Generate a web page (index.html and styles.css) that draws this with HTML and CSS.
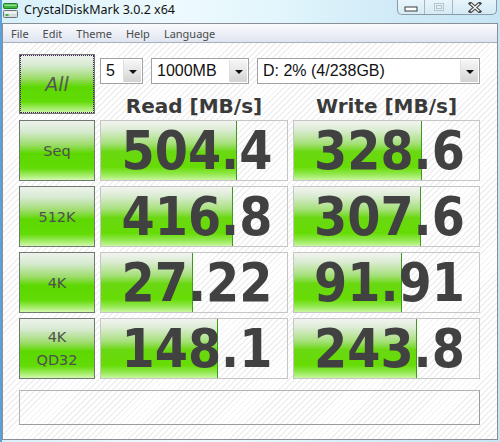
FILE: index.html
```html
<!DOCTYPE html>
<html>
<head>
<meta charset="utf-8">
<link rel="stylesheet" href="styles.css">
</head>
<body>
<div class="window">
  <div class="titlebar">
    <svg class="app-icon" width="15" height="15" viewBox="0 0 15 15">
      <rect x="0.5" y="0.5" width="14" height="5" rx="1" fill="#3fb43f" stroke="#1f7a2a"/>
      <rect x="1.5" y="1.5" width="12" height="1.5" fill="#8ee08e"/>
      <rect x="0.5" y="7.5" width="14" height="7" rx="1" fill="#d6dade" stroke="#6b7278"/>
      <rect x="1.5" y="8.5" width="12" height="2" fill="#f4f6f8"/>
      <rect x="2.5" y="11" width="3" height="2" fill="#3fb43f"/>
    </svg>
    <span class="title">CrystalDiskMark 3.0.2 x64</span>
    <div class="caption-buttons">
      <div class="cap cap-min">
        <svg width="14" height="6" viewBox="0 0 14 6"><rect x="1" y="1" width="12" height="4" fill="#fff" stroke="#3a3a3a"/></svg>
      </div>
      <div class="cap cap-max">
        <svg width="12" height="10" viewBox="0 0 12 10"><rect x="1.5" y="1.5" width="9" height="7" fill="none" stroke="#b8c4cc"/><rect x="3.5" y="3.5" width="5" height="3" fill="none" stroke="#b8c4cc"/></svg>
      </div>
      <div class="cap cap-close">
        <svg width="14" height="11" viewBox="0 0 14 11"><path d="M2.5 1.5 L11.5 9.5 M11.5 1.5 L2.5 9.5" stroke="#4a4a4a" stroke-width="3.6" stroke-linecap="square"/><path d="M2.8 1.8 L11.2 9.2 M11.2 1.8 L2.8 9.2" stroke="#f4f4f4" stroke-width="1.4"/></svg>
      </div>
    </div>
  </div>
  <div class="frame">
    <div class="menubar">
      <span class="menu-item">File</span>
      <span class="menu-item">Edit</span>
      <span class="menu-item">Theme</span>
      <span class="menu-item">Help</span>
      <span class="menu-item">Language</span>
    </div>
    <div class="client">
      <div class="top">
        <div class="btn btn-all">All</div>
        <div class="top-right">
          <div class="selects">
            <div class="select sel-count"><span class="sel-text">5</span><span class="sel-btn"></span></div>
            <div class="select sel-size"><span class="sel-text">1000MB</span><span class="sel-btn"></span></div>
            <div class="select sel-drive"><span class="sel-text">D: 2% (4/238GB)</span><span class="sel-btn"></span></div>
          </div>
          <div class="heads">
            <div class="head head-read">Read [MB/s]</div>
            <div class="head head-write">Write [MB/s]</div>
          </div>
        </div>
      </div>
      <div class="rows">
        <div class="row">
          <div class="btn btn-label">Seq</div>
          <div class="val"><div class="bar" style="width:136px"></div><span class="num">504.4</span></div>
          <div class="val"><div class="bar" style="width:128px"></div><span class="num">328.6</span></div>
        </div>
        <div class="row">
          <div class="btn btn-label">512K</div>
          <div class="val"><div class="bar" style="width:132px"></div><span class="num">416.8</span></div>
          <div class="val"><div class="bar" style="width:127px"></div><span class="num">307.6</span></div>
        </div>
        <div class="row">
          <div class="btn btn-label">4K</div>
          <div class="val"><div class="bar" style="width:92px"></div><span class="num">27.22</span></div>
          <div class="val"><div class="bar" style="width:108px"></div><span class="num">91.91</span></div>
        </div>
        <div class="row">
          <div class="btn btn-label btn-two">4K<br>QD32</div>
          <div class="val"><div class="bar" style="width:117px"></div><span class="num">148.1</span></div>
          <div class="val"><div class="bar" style="width:123px"></div><span class="num">243.8</span></div>
        </div>
      </div>
      <div class="comment"></div>
    </div>
  </div>
</div>
</body>
</html>
```

FILE: styles.css
```css
* { box-sizing: border-box; }

html, body {
  margin: 0;
  padding: 0;
}

body {
  width: 500px;
  height: 442px;
  overflow: hidden;
  font-family: "Liberation Sans", Arial, sans-serif;
}

.window {
  width: 500px;
  height: 442px;
  background:
    linear-gradient(90deg, #d7f0fa 0%, #eefafd 35%, #e2f6fc 55%, #d2ecf8 75%, #c6e5f4 100%);
  border-left: 2px solid #5d9fd8;
  display: flex;
  flex-direction: column;
}

.titlebar {
  height: 23px;
  display: flex;
  align-items: flex-start;
}

.app-icon {
  margin: 3px 0 0 1px;
  flex: none;
}

.title {
  margin-left: 6px;
  padding-top: 2px;
  font-family: "Noto Sans", "Open Sans", sans-serif;
  font-size: 12.5px;
  line-height: 16px;
  color: #111;
}

.caption-buttons {
  margin-left: auto;
  margin-right: 3px;
  width: 100px;
  height: 15px;
  display: flex;
  border: 1px solid #8b9aa6;
  border-top: none;
  border-radius: 0 0 5px 5px;
  background: linear-gradient(180deg, rgba(255,255,255,0.55), rgba(220,236,244,0.6));
  overflow: hidden;
}

.cap {
  display: flex;
  align-items: center;
  justify-content: center;
  height: 100%;
}

.cap-min {
  width: 27px;
  border-right: 1px solid #a9b6c0;
  align-items: flex-end;
  padding-bottom: 2px;
}

.cap-max {
  width: 28px;
  border-right: 1px solid #a9b6c0;
}

.cap-close {
  flex: 1;
}

.frame {
  margin-left: 0;
  width: 496px;
  height: 417px;
  border: 1px solid #8a8f96;
  display: flex;
  flex-direction: column;
  background: #fff;
}

.menubar {
  height: 19px;
  flex: none;
  display: flex;
  align-items: center;
  gap: 14px;
  padding-left: 8px;
  background: linear-gradient(180deg, #fafbfd 0%, #eef1f8 45%, #dfe5f0 100%);
  border-bottom: 1px solid #a7b0bf;
  font-family: "Noto Sans", "Open Sans", sans-serif;
  font-size: 11px;
  color: #4a4a4a;
}

.client {
  flex: 1;
  padding: 11px 0 0 16px;
  background: repeating-linear-gradient(135deg, #ffffff 0px, #ffffff 3px, #efefef 3px, #efefef 4.2px);
}

.top {
  display: flex;
  gap: 5px;
  height: 60px;
  margin-bottom: 6px;
}

.btn {
  border: 1px solid #6d7a6d;
  display: flex;
  align-items: center;
  justify-content: center;
  color: #4f4f4f;
  background: linear-gradient(180deg, #eef2ec 0%, #d6ead0 18%, #9edc6c 40%, #5cd800 55%, #62db06 80%, #a8ee70 93%, #d4f8b0 100%);
}

.btn-all {
  width: 76px;
  height: 60px;
  outline: 1px dotted #4a1a6a;
  outline-offset: -2px;
  font-family: "DejaVu Sans", sans-serif;
  font-style: italic;
  font-size: 19px;
  color: #555;
}

.top-right {
  display: flex;
  flex-direction: column;
}

.selects {
  display: flex;
  margin-top: 4px;
  height: 26px;
}

.select {
  height: 26px;
  border: 1px solid #a2a2a2;
  background: #fff;
  display: flex;
  padding: 1px;
}

.sel-count { width: 43px; }
.sel-size { width: 98px; margin-left: 8px; }
.sel-drive { width: 223px; margin-left: 8px; }

.sel-text {
  flex: 1;
  padding-left: 4px;
  font-family: "Liberation Sans", Arial, sans-serif;
  font-size: 16px;
  line-height: 22px;
  color: #111;
  white-space: nowrap;
}

.sel-btn {
  width: 18px;
  flex: none;
  position: relative;
  background: linear-gradient(180deg, #f6f6f6 0%, #e6e6e6 50%, #d2d2d2 100%);
  border-left: 1px solid #e0e0e0;
}

.sel-btn::after {
  content: "";
  position: absolute;
  left: 5px;
  top: 10px;
  border-left: 4px solid transparent;
  border-right: 4px solid transparent;
  border-top: 4px solid #111;
}

.heads {
  display: flex;
  gap: 5px;
  margin-top: 10px;
}

.head {
  text-align: center;
  font-family: "DejaVu Sans", sans-serif;
  font-weight: bold;
  font-size: 20px;
  line-height: 24px;
  color: #3a3a3a;
}

.head-read { width: 188px; }
.head-write { width: 187px; }

.rows {
  display: flex;
  flex-direction: column;
  gap: 5px;
}

.row {
  display: grid;
  grid-template-columns: 76px 188px 187px;
  column-gap: 5px;
  height: 61px;
}

.btn-label {
  font-family: "DejaVu Sans", sans-serif;
  font-size: 14.5px;
}

.btn-two {
  text-align: center;
  line-height: 23px;
}

.val {
  position: relative;
  border: 1px solid #c6c6c6;
  display: flex;
  align-items: center;
  justify-content: center;
  overflow: hidden;
}

.bar {
  position: absolute;
  left: 0;
  top: 0;
  bottom: 0;
  border-right: 1px solid #3e9a1e;
  background: linear-gradient(180deg, #f2f4f0 0%, #dcecd4 15%, #a6e07a 38%, #6ad812 52%, #66dc04 78%, #92e84e 90%, #c8f6a0 100%);
}

.num {
  position: relative;
  padding-left: 6px;
  font-family: "DejaVu Sans Condensed", "DejaVu Sans", sans-serif;
  font-stretch: condensed;
  font-weight: bold;
  font-size: 53px;
  line-height: 59px;
  color: #414141;
}

.comment {
  margin-top: 11px;
  width: 461px;
  height: 35px;
  border: 1px solid #b4b4b4;
  border-bottom-color: #9c9c9c;
  border-right-color: #9c9c9c;
}
```
